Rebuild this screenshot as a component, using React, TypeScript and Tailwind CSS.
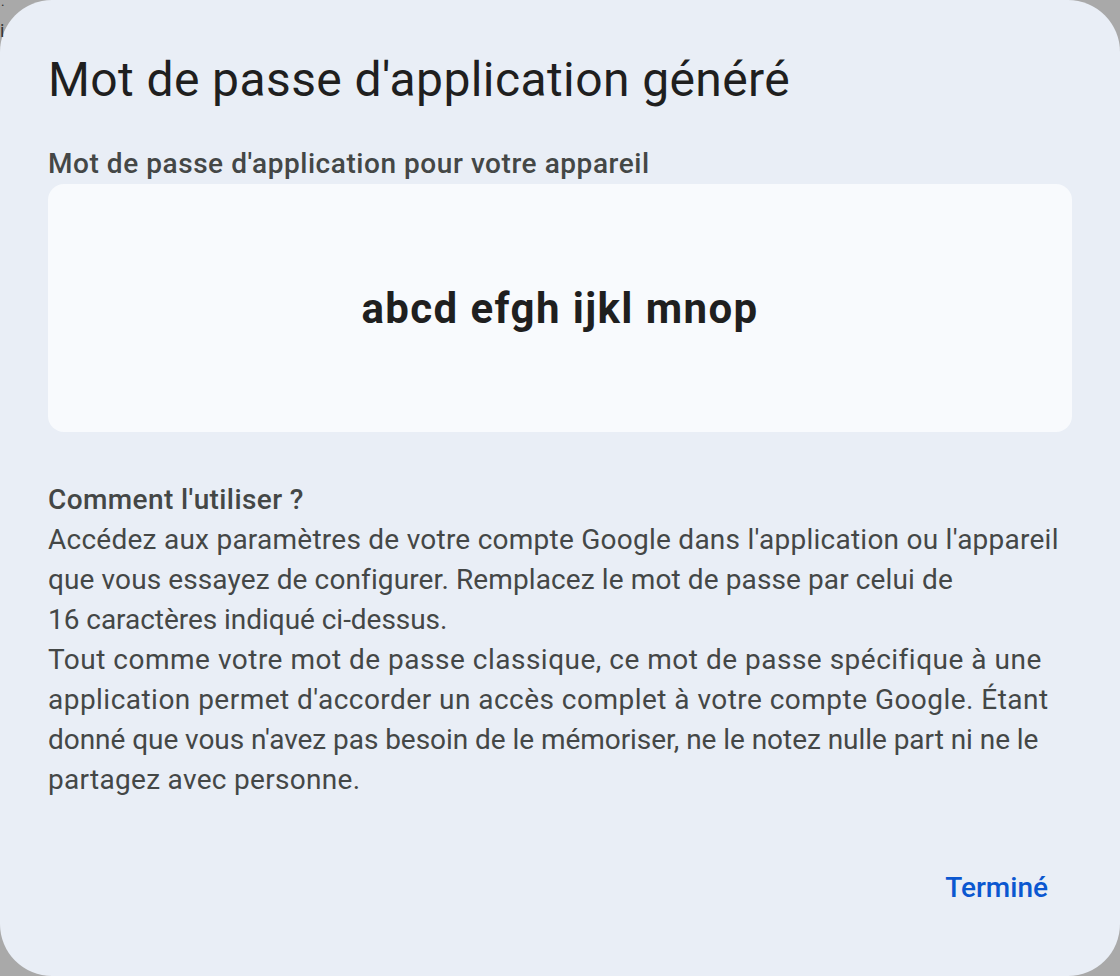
import React from "react";

const sans = { fontFamily: "Roboto, 'Noto Sans', sans-serif" };

export default function App() {
  return (
    <div className="relative w-[1120px] h-[976px] bg-[#a9a9a9] overflow-hidden" style={sans}>
      <div className="relative w-[1120px] h-[976px] rounded-[52px] bg-[#e9eef6] px-12 pt-12 pb-12 flex flex-col">
        <h1 className="text-[48px] leading-[64px] text-[#1f1f1f] font-normal tracking-[0.4px]">
          Mot de passe d'application généré
        </h1>
        <div className="mt-8 text-[28px] leading-[40px] font-medium text-[#444746] tracking-[0.55px]">
          Mot de passe d'application pour votre appareil
        </div>
        <div className="h-[248px] rounded-[16px] bg-[#f8fafd] flex items-center justify-center">
          <span className="text-[42px] font-bold text-[#1f1f1f] tracking-[1.4px]">abcd efgh ijkl mnop</span>
        </div>
        <div className="mt-12 text-[28px] leading-[40px] text-[#444746]">
          <div className="font-medium tracking-[0.4px]">Comment l'utiliser ?</div>
          <div className="whitespace-nowrap">
            <span className="block tracking-[0.25px]">Accédez aux paramètres de votre compte Google dans l'application ou l'appareil</span>
            <span className="block tracking-[0.11px]">que vous essayez de configurer. Remplacez le mot de passe par celui de</span>
            <span className="block tracking-[-0.04px]">16 caractères indiqué ci-dessus.</span>
          </div>
          <div className="whitespace-nowrap">
            <span className="block tracking-[0.5px]">Tout comme votre mot de passe classique, ce mot de passe spécifique à une</span>
            <span className="block tracking-[0.47px]">application permet d'accorder un accès complet à votre compte Google. Étant</span>
            <span className="block tracking-[-0.05px]">donné que vous n'avez pas besoin de le mémoriser, ne le notez nulle part ni ne le</span>
            <span className="block tracking-[0.3px]">partagez avec personne.</span>
          </div>
        </div>
        <div className="mt-auto flex justify-end">
          <button className="h-[80px] px-6 rounded-full text-[28px] font-medium text-[#0b57d0]">Terminé</button>
        </div>
      </div>
      <span className="absolute z-10 left-[1px] top-[-6px] text-[14px] leading-none text-[#333]">:</span>
      <span className="absolute z-10 left-[0px] top-[22px] text-[18px] leading-none text-[#333]">i</span>
    </div>
  );
}
